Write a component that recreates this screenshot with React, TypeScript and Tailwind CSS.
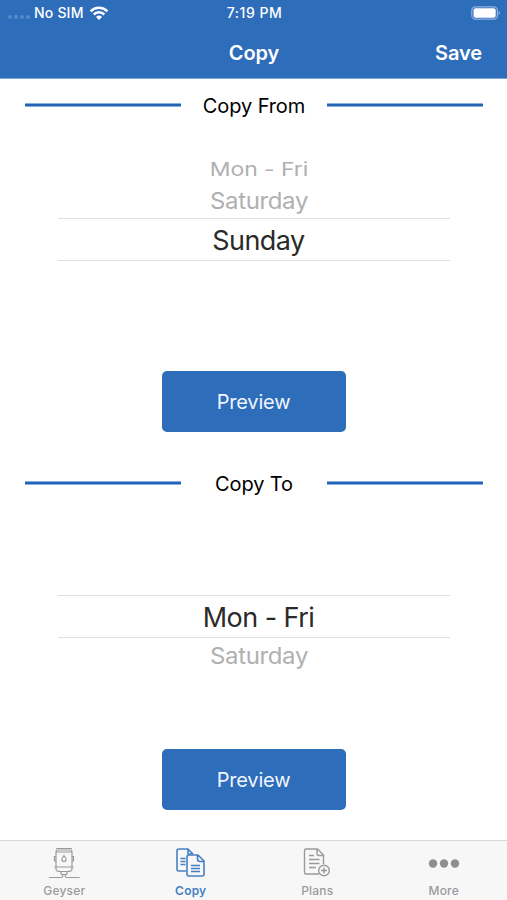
import type { ReactNode } from "react";

function StatusBar() {
  return (
    <div className="flex h-[26px] items-center text-white">
      <div className="flex flex-1 items-center pl-2">
        <div className="flex gap-[2px] pt-[8px]">
          {[0, 1, 2, 3].map((i) => (
            <span key={i} className="size-[4px] rounded-full bg-[#5389cb]" />
          ))}
        </div>
        <span className="ml-[4px] whitespace-nowrap text-[14px] font-medium leading-[26px] tracking-[0.2px]">No SIM</span>
        <svg className="ml-[5px]" width="20" height="14" viewBox="0 0 20 14" fill="none" stroke="white" strokeWidth="2.5">
          <path d="M1.6 5.3a12 12 0 0 1 16.8 0" />
          <path d="M4.7 8.5a7.5 7.5 0 0 1 10.6 0" />
          <path d="M7 10.9a4.300 4.300 0 0 1 6 0L10 14z" fill="white" stroke="none" />
        </svg>
      </div>
      <span className="whitespace-nowrap text-[14px] font-medium leading-[26px] tracking-[0.5px]">7:19 PM</span>
      <div className="flex flex-1 items-center justify-end pr-[6px]">
        <svg width="30" height="14" viewBox="0 0 30 14">
          <rect x="0.8" y="0.8" width="25.6" height="12.4" rx="3.6" fill="none" stroke="#8fb4e0" strokeWidth="1.2" />
          <rect x="2.5" y="2.3" width="22.2" height="9.4" rx="2" fill="white" />
          <path d="M27.7 5c1.8.8 1.8 3.2 0 4z" fill="#8fb4e0" />
        </svg>
      </div>
    </div>
  );
}

function SectionTitle({ children }: { children: ReactNode }) {
  return (
    <div className="flex h-[30px] items-center justify-between pl-[25px] pr-[24px]">
      <span className="h-[4px] w-[156px] rounded-[1px] border-y border-[#86aede] bg-[#2563b4]" />
      <span className="whitespace-nowrap pt-[2px] text-[20px] leading-[30px] tracking-[-0.1px] text-black">{children}</span>
      <span className="h-[4px] w-[156px] rounded-[1px] border-y border-[#86aede] bg-[#2563b4]" />
    </div>
  );
}

function Selected({ children }: { children: ReactNode }) {
  return (
    <div className="flex h-[43px] w-[392px] items-center justify-center border-y border-[#e0e0e0] pl-[10px] pt-px text-[27px] leading-[41px] tracking-[-0.55px] text-[#2a2a2a]">
      {children}
    </div>
  );
}

function Saturday() {
  return (
    <div className="flex h-[34px] items-center pl-[11px]">
      <span className="scale-y-[0.95] whitespace-nowrap text-[24px] leading-[34px] tracking-[-0.35px]">Saturday</span>
    </div>
  );
}

function Preview() {
  return (
    <button className="mx-auto block h-[61px] w-[184px] rounded-[5px] bg-[#2e6dba] pt-[2px] text-[20px] leading-[59px] tracking-[-0.2px] text-[#eef5ff]">
      Preview
    </button>
  );
}

function GeyserIcon() {
  return (
    <svg width="32" height="32" viewBox="0 0 32 32" fill="none" stroke="currentColor" strokeWidth="1.2">
      <path d="M8 1.500h16M8 5q0-2 2-2h12q2 0 2 2v15H8zM8 5h16M6.500 20h19M8 20v2q0 2.500 4 2.500h8q4 0 4-2.500v-2M12.500 24.500l1 3h5l1-3M14.800 27.500v1.500q0 1.500-1.500 1.500H1M17.200 27.500v1.500q0 1.500 1.500 1.500h13M8 9.500H6.500v4.500H8M24 9.500h1.500v4.500H24" />
      <path d="M16 8.500q-3 4-1.800 5.300q1.800 1.500 3.600 0Q19 12.500 16 8.500z" />
    </svg>
  );
}

function CopyIcon() {
  return (
    <svg width="32" height="32" viewBox="0 0 32 32" fill="none" stroke="currentColor" strokeWidth="1.6" strokeLinejoin="round">
      <path d="M11 24H4q-2 0-2-2V4q0-2 2-2h9l5 5M13 2v5h4M5.500 11.500h5M5.500 14.500h5M5.500 17.500h5" />
      <path d="M14 8h9l6 6v13q0 2-2 2H14q-2 0-2-2V10q0-2 2-2zM22.500 8v4q0 2.500 2.500 2.500h4M16 18.500h9M16 21.500h9M16 24.500h9" />
    </svg>
  );
}

function PlansIcon() {
  return (
    <svg width="32" height="32" viewBox="0 0 32 32" fill="none" stroke="currentColor" strokeWidth="1.4" strokeLinejoin="round">
      <path d="M18 27H5q-1.500 0-1.500-1.500v-22Q3.500 2 5 2H16.500l6 6v9M16 2v4.500q0 2 2 2H22.500M8 8.500h5M8 12.500h10.500M8 16.500h10.500M8 20.500h7" />
      <circle cx="23" cy="23.500" r="5.300" />
      <path d="M23 20.500v6M20 23.500h6" />
    </svg>
  );
}

function MoreIcon() {
  return (
    <svg width="32" height="32" viewBox="0 0 32 32" fill="#8e8e8e">
      <circle cx="5" cy="16.500" r="4.200" />
      <circle cx="16" cy="16.500" r="4.200" />
      <circle cx="27" cy="16.500" r="4.200" />
    </svg>
  );
}

function Tab({ icon, label, active = false }: { icon: ReactNode; label: string; active?: boolean }) {
  return (
    <div className={active ? "flex flex-col items-center text-[#4580c2]" : "flex flex-col items-center text-[#9b9b9b]"}>
      <div className="mt-[6px] h-[32px]">{icon}</div>
      <span className={active ? "mt-[4px] text-[12px] font-semibold leading-[16px] tracking-[0.2px]" : "mt-[4px] text-[12px] font-medium leading-[16px] tracking-[0.2px]"}>{label}</span>
    </div>
  );
}

export default function App() {
  return (
    <div className="flex h-[900px] w-[507px] flex-col overflow-hidden bg-white font-['Inter',sans-serif]">
      <header className="h-[79px] shrink-0 border-b border-[#77a5dc] bg-[#2e6dba]">
        <StatusBar />
        <div className="grid h-[54px] grid-cols-3 items-center text-[20px] font-semibold tracking-[-0.1px] text-white">
          <span className="col-start-2 pl-px text-center leading-[54px]">Copy</span>
          <span className="pr-[25px] text-right leading-[54px]">Save</span>
        </div>
      </header>
      <main className="flex-1">
        <section className="h-[378px] pt-[11px]">
          <SectionTitle>Copy From</SectionTitle>
          <div className="flex h-[251px] flex-col items-center pt-[34px] text-[#b0b0b0]">
            <div className="flex h-[30px] items-center pl-[11px]">
              <span className="scale-y-[0.82] whitespace-nowrap text-[23px] leading-[30px] tracking-[-0.1px]">Mon - Fri</span>
            </div>
            <Saturday />
            <Selected>Sunday</Selected>
          </div>
          <Preview />
        </section>
        <section className="h-[383px] pt-[11px]">
          <SectionTitle>Copy To</SectionTitle>
          <div className="flex h-[251px] flex-col items-center pt-[97px] text-[#b0b0b0]">
            <Selected>Mon - Fri</Selected>
            <div className="pt-px">
              <Saturday />
            </div>
          </div>
          <Preview />
        </section>
      </main>
      <nav className="grid h-[60px] shrink-0 grid-cols-4 border-t border-[#d8d8d8] bg-[#f7f7f7] pl-px">
        <Tab icon={<GeyserIcon />} label="Geyser" />
        <Tab icon={<CopyIcon />} label="Copy" active />
        <Tab icon={<PlansIcon />} label="Plans" />
        <Tab icon={<MoreIcon />} label="More" />
      </nav>
    </div>
  );
}
